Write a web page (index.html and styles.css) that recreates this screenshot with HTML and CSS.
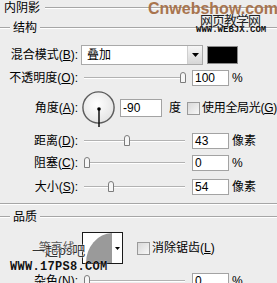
FILE: index.html
```html
<!DOCTYPE html>
<html>
<head>
<meta charset="utf-8">
<link rel="stylesheet" href="styles.css">
</head>
<body>
<div class="panel">
  <div class="title"><span class="title-text">内阴影</span><span class="rule"></span></div>
  <div class="legend"><span class="rule lead"></span><span class="legend-text">结构</span><span class="rule"></span></div>

  <div class="row r-blend">
    <span class="lbl">混合模式(<u>B</u>):</span>
    <div class="select">
      <span class="select-val">叠加</span>
      <span class="select-btn"><svg width="7" height="4" viewBox="0 0 7 4"><path d="M0 0 H7 L3.5 4 Z" fill="#000"/></svg></span>
    </div>
    <span class="swatch"></span>
  </div>

  <div class="row r-opacity">
    <span class="lbl">不透明度(<u>O</u>):</span>
    <div class="slider"><span class="track"></span><svg class="thumb" style="left:97px" width="8" height="11" viewBox="0 0 8 11"><path d="M1.5 10.5 V3 Q1.5 0.5 4 0.5 Q6.5 0.5 6.5 3 V10.5 Z" fill="#f6f6f6" stroke="#7c7c7c"/></svg></div>
    <span class="num">100</span><span class="unit">%</span>
  </div>

  <div class="row r-angle">
    <span class="lbl">角度(<u>A</u>):</span>
    <svg class="dial" width="34" height="34" viewBox="0 0 34 34">
      <defs><radialGradient id="dg" cx="45%" cy="40%" r="60%"><stop offset="0" stop-color="#ffffff"/><stop offset="1" stop-color="#e4e4e4"/></radialGradient></defs>
      <circle cx="16.5" cy="16.5" r="15.6" fill="url(#dg)" stroke="#5c5c5c" stroke-width="1.4"/>
      <line x1="17" y1="18" x2="17" y2="36" stroke="#000" stroke-width="1.4"/>
      <circle cx="17" cy="18" r="1.8" fill="#000"/>
    </svg>
    <span class="num num-angle">-90</span>
    <span class="unit unit-deg">度</span>
    <span class="check"></span>
    <span class="check-text check-global">使用全局光(<u>G</u>)</span>
  </div>

  <div class="row r-distance">
    <span class="lbl">距离(<u>D</u>):</span>
    <div class="slider"><span class="track"></span><svg class="thumb" style="left:41px" width="8" height="11" viewBox="0 0 8 11"><path d="M1.5 10.5 V3 Q1.5 0.5 4 0.5 Q6.5 0.5 6.5 3 V10.5 Z" fill="#f6f6f6" stroke="#7c7c7c"/></svg></div>
    <span class="num">43</span><span class="unit">像素</span>
  </div>

  <div class="row r-choke">
    <span class="lbl">阻塞(<u>C</u>):</span>
    <div class="slider"><span class="track"></span><svg class="thumb" style="left:1px" width="8" height="11" viewBox="0 0 8 11"><path d="M1.5 10.5 V3 Q1.5 0.5 4 0.5 Q6.5 0.5 6.5 3 V10.5 Z" fill="#f6f6f6" stroke="#7c7c7c"/></svg></div>
    <span class="num">0</span><span class="unit">%</span>
  </div>

  <div class="row r-size">
    <span class="lbl">大小(<u>S</u>):</span>
    <div class="slider"><span class="track"></span><svg class="thumb" style="left:25px" width="8" height="11" viewBox="0 0 8 11"><path d="M1.5 10.5 V3 Q1.5 0.5 4 0.5 Q6.5 0.5 6.5 3 V10.5 Z" fill="#f6f6f6" stroke="#7c7c7c"/></svg></div>
    <span class="num">54</span><span class="unit">像素</span>
  </div>

  <div class="separator"></div>

  <div class="legend legend-quality"><span class="rule lead"></span><span class="legend-text">品质</span><span class="rule"></span></div>

  <div class="row r-contour">
    <span class="lbl lbl-hidden">等高线:</span>
    <svg class="contour" width="41" height="32" viewBox="0 0 41 32">
      <rect x="0.5" y="0.5" width="40" height="31" fill="#fff" stroke="#1a1a1a"/>
      <path d="M4 31 A27 30 0 0 1 30 1 L30 31 Z" fill="#9a9a9a"/>
      <path d="M33 15 H38 L35.5 18 Z" fill="#000"/>
    </svg>
    <span class="check check-aa"></span>
    <span class="check-text">消除锯齿(<u>L</u>)</span>
  </div>

  <div class="row r-noise">
    <span class="lbl">杂色(<u>N</u>):</span>
    <div class="slider"><span class="track"></span><svg class="thumb" style="left:1px" width="8" height="11" viewBox="0 0 8 11"><path d="M1.5 10.5 V3 Q1.5 0.5 4 0.5 Q6.5 0.5 6.5 3 V10.5 Z" fill="#f6f6f6" stroke="#7c7c7c"/></svg></div>
    <span class="num">0</span><span class="unit">%</span>
  </div>
</div>

<div class="wm wm-cn">Cnwebshow.com</div>
<div class="wm wm-jx">网页教学网</div>
<div class="wm wm-jxurl">WWW.WEBJX.COM</div>
<div class="wm wm-ps">一起ps吧</div>
<div class="wm wm-psurl">WWW.17PS8.COM</div>
</body>
</html>
```

FILE: styles.css
```css
html, body {
  margin: 0;
  padding: 0;
  overflow: hidden;
}
body {
  width: 277px;
  height: 283px;
  background: #ededed;
  font-family: "Liberation Sans", "Noto Sans CJK SC", sans-serif;
  font-size: 12px;
  color: #000;
  position: relative;
}
u { text-decoration: underline; }

.panel {
  display: flex;
  flex-direction: column;
}

.title {
  display: flex;
  align-items: center;
  height: 16px;
  padding-left: 4px;
}
.title-text { line-height: 16px; }
.title .rule { margin-left: 5px; }

.rule {
  flex: 1;
  height: 0;
  border-top: 1px solid #a6a6a6;
  border-bottom: 1px solid #ffffff;
}
.rule.lead {
  flex: none;
  width: 10px;
}

.legend {
  display: flex;
  align-items: center;
  height: 16px;
  margin-top: 4px;
}
.legend-text {
  margin: 0 3px;
  line-height: 16px;
}

.row {
  display: flex;
  align-items: center;
  height: 16px;
  line-height: 16px;
  white-space: nowrap;
}
.lbl {
  flex: none;
  width: 78px;
  text-align: right;
}
.lbl-hidden { color: #555; }

.r-blend { height: 20px; margin-top: 9px; }
.r-opacity { margin-top: 5px; }
.r-angle { height: 34px; margin-top: 5px; }
.r-distance { margin-top: 8px; }
.r-choke { margin-top: 6px; }
.r-size { margin-top: 8px; }
.separator {
  margin-top: 8px;
  border-top: 1px solid #a6a6a6;
  border-bottom: 1px solid #ffffff;
}
.legend-quality { margin-top: 4px; }
.r-contour { height: 32px; margin-top: 7px; }
.r-noise { margin-top: 9px; }

.select {
  flex: none;
  margin-left: 3px;
  width: 122px;
  height: 20px;
  box-sizing: border-box;
  border: 1px solid #a9a9a9;
  background: #fff;
  display: flex;
}
.select-val {
  flex: 1;
  padding-left: 5px;
  line-height: 18px;
}
.select-btn {
  width: 14px;
  border-left: 1px solid #cfcfcf;
  background: linear-gradient(#f6f6f6, #d6d6d6);
  display: flex;
  align-items: center;
  justify-content: center;
}
.swatch {
  flex: none;
  margin-left: 4px;
  width: 31px;
  height: 18px;
  box-sizing: border-box;
  border: 1px solid #8a8a8a;
  background: #000;
}

.slider {
  flex: none;
  position: relative;
  margin-left: 4px;
  width: 106px;
  height: 16px;
}
.track {
  position: absolute;
  left: 2px;
  right: 3px;
  top: 7px;
  border-top: 1px solid #b2b2b2;
  border-bottom: 1px solid #ffffff;
}
.thumb {
  position: absolute;
  top: 2px;
}

.num {
  flex: none;
  margin-left: 4px;
  width: 37px;
  height: 16px;
  box-sizing: border-box;
  border: 1px solid #a3a3a3;
  background: #fff;
  padding-left: 2px;
  line-height: 14px;
}
.unit { margin-left: 3px; }

.dial {
  flex: none;
  margin-left: 4px;
  overflow: visible;
}
.num-angle {
  width: 42px;
  height: 18px;
  line-height: 16px;
}
.unit-deg { margin-left: 7px; }

.check {
  flex: none;
  margin-left: 6px;
  width: 13px;
  height: 13px;
  box-sizing: border-box;
  border: 1px solid #9a9a9a;
  background: linear-gradient(135deg, #d8d8d8, #f8f8f8);
}
.check-text { margin-left: 2px; }
.check-global { letter-spacing: -0.3px; }

.contour {
  flex: none;
  margin-left: 4px;
}
.check-aa { margin-left: 14px; }

.wm {
  position: absolute;
  white-space: nowrap;
}
.wm-cn {
  left: 148px;
  top: 1px;
  font-family: "Liberation Sans", sans-serif;
  font-weight: bold;
  font-size: 16px;
  line-height: 16px;
  color: #a8744e;
}
.wm-jx {
  left: 200px;
  top: 12px;
  font-family: "Noto Sans CJK SC", sans-serif;
  font-size: 13px;
  line-height: 15px;
  letter-spacing: -1px;
  color: #222;
}
.wm-jxurl {
  left: 196px;
  top: 26px;
  font-family: "Liberation Mono", monospace;
  font-weight: bold;
  font-size: 9px;
  line-height: 9px;
  color: #111;
}
.wm-ps {
  left: 32px;
  top: 242px;
  font-family: "Noto Sans CJK SC", sans-serif;
  font-size: 13px;
  line-height: 15px;
  color: #333;
  text-shadow: 0 0 2px #fff, 0 0 1px #fff, 0 0 1px #fff;
}
.wm-psurl {
  left: 10px;
  top: 261px;
  font-family: "Liberation Mono", monospace;
  font-weight: bold;
  font-size: 12px;
  line-height: 12px;
  letter-spacing: 0.3px;
  color: #111;
  text-shadow: 0 0 1px #fff;
}
```
